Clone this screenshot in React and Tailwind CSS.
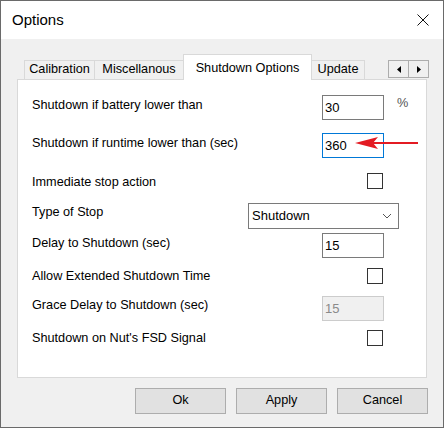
import React from "react";

function TextBox({ value, focused, disabled }) {
  const border = focused
    ? "border-[#0078d7]"
    : disabled
    ? "border-[#cccccc]"
    : "border-[#7a7a7a]";
  const bg = disabled ? "bg-[#f0f0f0] text-[#8a8a8a]" : "bg-white text-black";
  return (
    <div
      className={`w-[62px] h-[25px] border ${border} ${bg} pl-[2px] text-[13px] leading-[23px]`}
    >
      {value}
    </div>
  );
}

function CheckBox() {
  return (
    <div className="ml-[45px] w-[16px] h-[16px] border border-[#333333] bg-white" />
  );
}

function Row({ h, mt, label, labelW = "w-[290px]", children }) {
  return (
    <div className={`flex items-start ${h}`}>
      <div className={`${labelW} ${mt} leading-[16px] text-black`}>{label}</div>
      {children}
    </div>
  );
}

export default function App() {
  return (
    <div className="w-[444px] h-[428px] border border-[#6a6a6a] flex flex-col bg-[#f0f0f0] font-['Liberation_Sans',Arial,sans-serif] text-[12.7px]">
      {/* Title bar */}
      <div className="h-[38px] bg-white flex items-center justify-between pl-[11px] pr-[14px]">
        <span className="text-[15px] text-black">Options</span>
        <svg width="12" height="12" viewBox="0 0 12 12">
          <path d="M0.5 0.5 L11.5 11.5 M11.5 0.5 L0.5 11.5" stroke="#111" strokeWidth="1" />
        </svg>
      </div>

      {/* Body */}
      <div className="flex-1 pt-[15px] pl-[16px]">
        {/* Tabs */}
        <div className="relative z-10 flex items-end h-[26px] w-[412px] pl-[7px]">
          <div className="w-[71px] h-[20px] border border-[#d9d9d9] bg-[#f0f0f0] flex items-center justify-center text-black">
            Calibration
          </div>
          <div className="-ml-px w-[90px] h-[20px] border border-[#d9d9d9] bg-[#f0f0f0] flex items-center justify-center text-black">
            Miscellanous
          </div>
          <div className="-ml-px w-[129px] h-[26px] border-l border-t border-r border-[#d9d9d9] bg-white flex items-start pt-[4px] justify-center text-black">
            Shutdown Options
          </div>
          <div className="-ml-px w-[54px] h-[20px] border border-[#d9d9d9] bg-[#f0f0f0] flex items-center justify-center text-black">
            Update
          </div>
          <div className="ml-auto self-start mt-[6px] flex">
            <div className="w-[21px] h-[18px] border border-[#adadad] bg-[#f0f0f0] flex items-center justify-center">
              <svg width="4" height="7" viewBox="0 0 4 7">
                <path d="M4 0 L0 3.5 L4 7 Z" fill="#000" />
              </svg>
            </div>
            <div className="-ml-px w-[21px] h-[18px] border border-[#adadad] bg-[#f0f0f0] flex items-center justify-center">
              <svg width="4" height="7" viewBox="0 0 4 7">
                <path d="M0 0 L4 3.5 L0 7 Z" fill="#000" />
              </svg>
            </div>
          </div>
        </div>

        {/* Panel */}
        <div className="relative -mt-px w-[410px] h-[299px] bg-white border border-[#d9d9d9] pt-[15px] pl-[14px]">
          <Row h="h-[38px]" mt="mt-[2px]" label="Shutdown if battery lower than">
            <TextBox value="30" />
            <span className="ml-[13px] leading-[16px] text-[#555]">%</span>
          </Row>
          <Row h="h-[40px]" mt="mt-[2px]" label="Shutdown if runtime lower than (sec)">
            <TextBox value="360" focused />
          </Row>
          <Row h="h-[30px]" mt="mt-[1px]" label="Immediate stop action">
            <CheckBox />
          </Row>
          <Row h="h-[30px]" mt="mt-[1px]" label="Type of Stop" labelW="w-[216px]">
            <div className="w-[151px] h-[26px] border border-[#7a7a7a] bg-white flex items-center justify-between pl-[3px] pr-[6px] text-[13px] text-black">
              <span>Shutdown</span>
              <svg width="10" height="6" viewBox="0 0 10 6">
                <polyline points="1,1 5,5 9,1" fill="none" stroke="#555" strokeWidth="1" />
              </svg>
            </div>
          </Row>
          <Row h="h-[35px]" mt="mt-[2px]" label="Delay to Shutdown (sec)">
            <TextBox value="15" />
          </Row>
          <Row h="h-[28px]" mt="mt-0" label="Allow Extended Shutdown Time">
            <CheckBox />
          </Row>
          <Row h="h-[34px]" mt="mt-[1px]" label="Grace Delay to Shutdown (sec)">
            <TextBox value="15" disabled />
          </Row>
          <Row h="h-[20px]" mt="mt-0" label="Shutdown on Nut's FSD Signal">
            <CheckBox />
          </Row>

          {/* Red arrow annotation */}
          <svg
            className="absolute left-[336px] top-[56px]"
            width="66"
            height="14"
            viewBox="0 0 66 14"
          >
            <line x1="18" y1="7" x2="64" y2="7" stroke="#e31b23" strokeWidth="2" />
            <path d="M1 7 L24 1 L19 7 L24 13 Z" fill="#e31b23" />
          </svg>
        </div>

        {/* Buttons */}
        <div className="mt-[10px] w-[411px] flex justify-end gap-[10px]">
          {["Ok", "Apply", "Cancel"].map((t) => (
            <div
              key={t}
              className="w-[91px] h-[26px] border border-[#adadad] bg-[#e1e1e1] flex items-center justify-center text-black"
            >
              {t}
            </div>
          ))}
        </div>
      </div>
    </div>
  );
}
